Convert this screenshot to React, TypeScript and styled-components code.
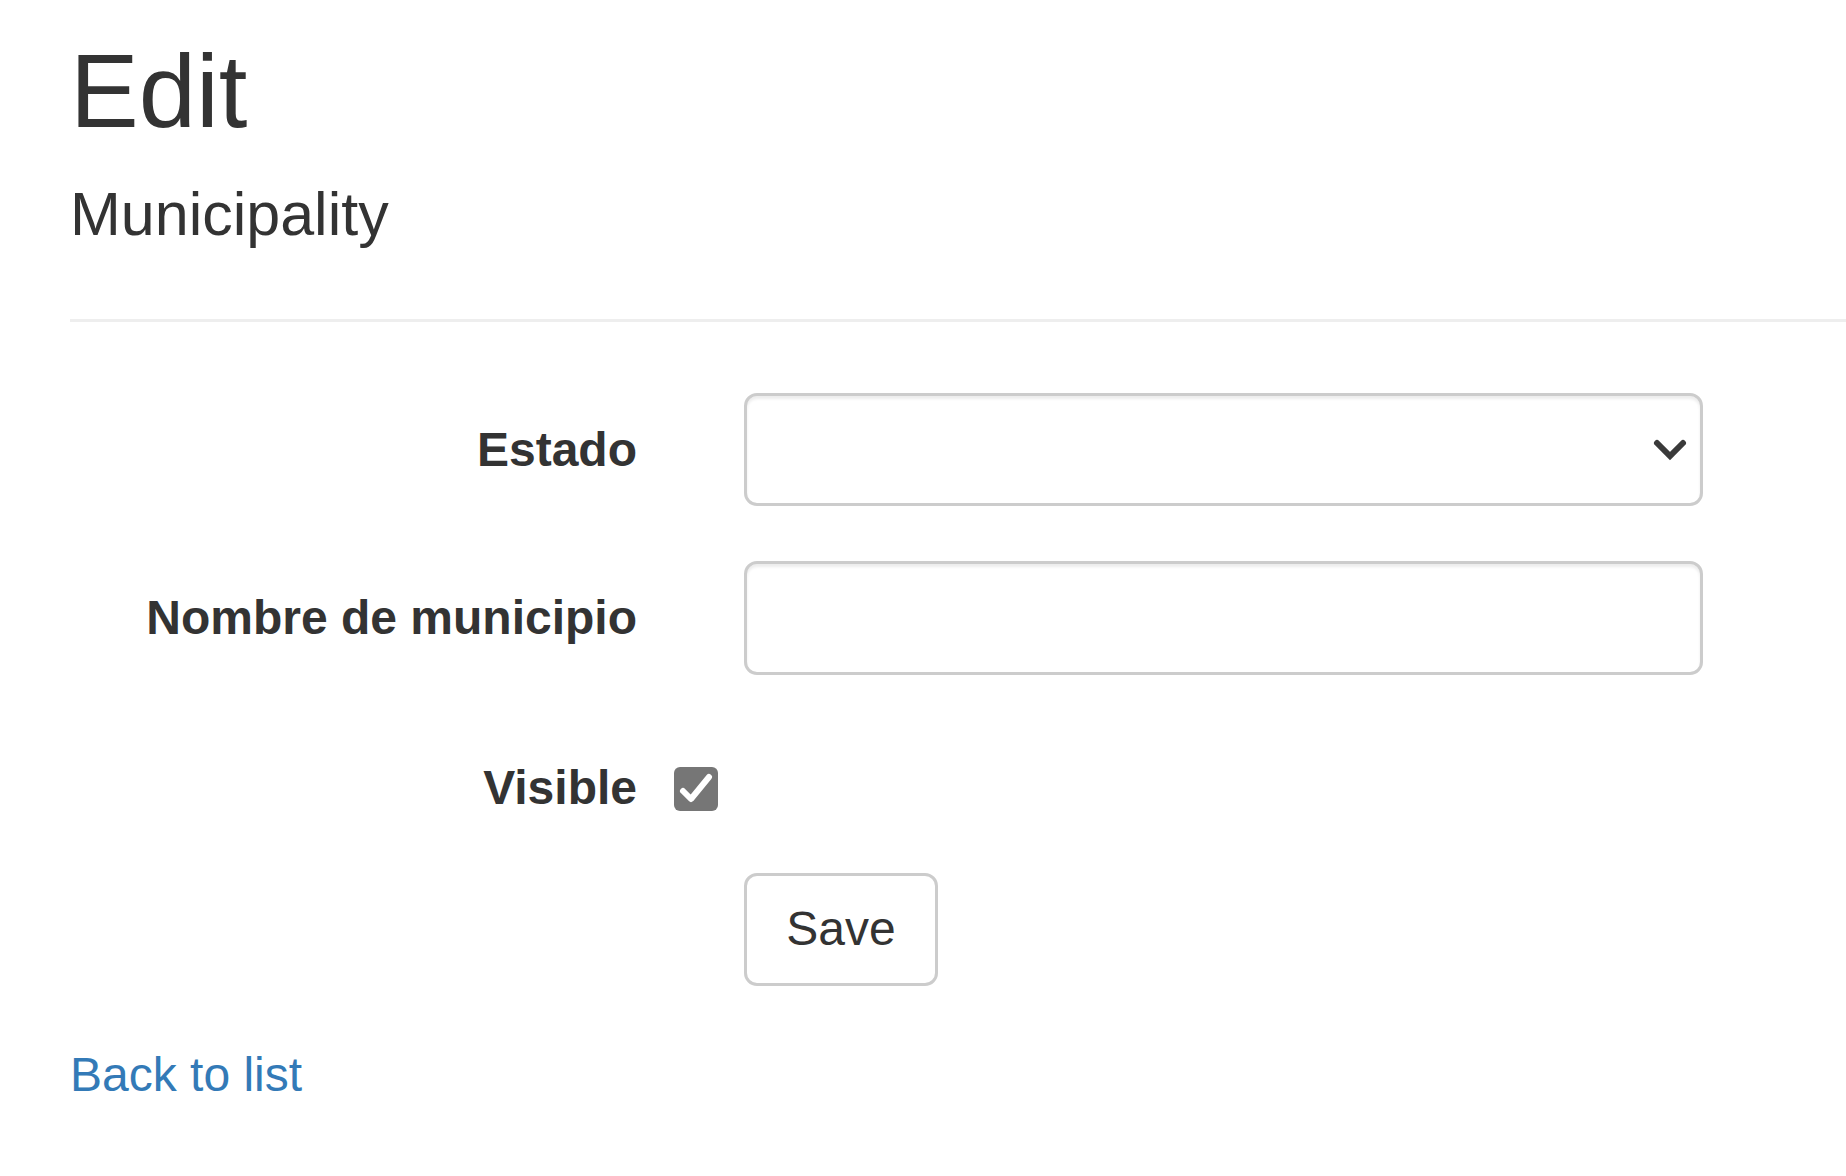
import React from "react";
import styled, { createGlobalStyle } from "styled-components";

const GlobalStyle = createGlobalStyle`
  html, body {
    margin: 0;
    padding: 0;
    background: #ffffff;
    overflow: hidden;
  }
  body {
    font-family: "Liberation Sans", Arial, Helvetica, sans-serif;
    color: #333333;
  }
  * { box-sizing: border-box; }
`;

const Page = styled.main`
  padding-left: 70px;
  padding-top: 35px;
  min-height: 1176px;
`;

const Title = styled.h2`
  margin: 0 0 33px 0;
  font-size: 103px;
  font-weight: 400;
  line-height: 1.1;
  color: #333333;
`;

const Subtitle = styled.h4`
  margin: 0;
  font-size: 61px;
  font-weight: 400;
  line-height: 1.1;
  color: #333333;
`;

const Rule = styled.hr`
  margin: 71px 0 71px 0;
  border: 0;
  border-top: 3px solid #eeeeee;
`;

const Form = styled.form`
  display: flex;
  flex-direction: column;
`;

const FormGroup = styled.div<{ $check?: boolean }>`
  display: grid;
  grid-template-columns: 567px 107px 959px;
  align-items: center;
  min-height: ${(p) => (p.$check ? "44px" : "113px")};
  margin: ${(p) => (p.$check ? "24px 0 50px 0" : "0 0 55px 0")};
`;

const Label = styled.label`
  grid-column: 1;
  justify-self: end;
  font-size: 48px;
  font-weight: 700;
  line-height: 1.42857;
  color: #333333;
`;

const Control = styled.div`
  grid-column: 3;
  position: relative;
`;

const fieldBase = `
  display: block;
  width: 100%;
  height: 114px;
  border: 3px solid #cccccc;
  border-radius: 13px;
  background: #ffffff;
  box-shadow: inset 0 3px 3px rgba(0, 0, 0, 0.075);
  font-family: "Liberation Sans", Arial, sans-serif;
  font-size: 48px;
  color: #555555;
  padding: 0 40px;
  outline: none;
`;

const Select = styled.select`
  ${fieldBase}
  height: 113px;
  appearance: none;
  -webkit-appearance: none;
`;

const Input = styled.input`
  ${fieldBase}
`;

const Chevron = styled.svg`
  position: absolute;
  right: 15px;
  top: 44px;
  width: 36px;
  height: 26px;
  pointer-events: none;
`;

const CheckCell = styled.div`
  grid-column: 2;
  padding-left: 37px;
  display: flex;
  align-items: center;
`;

const CheckBox = styled.span`
  display: inline-flex;
  align-items: center;
  justify-content: center;
  width: 44px;
  height: 44px;
  border-radius: 6px;
  background: #767676;
`;

const Button = styled.button`
  grid-column: 3;
  justify-self: start;
  width: 194px;
  height: 113px;
  border: 3px solid #cccccc;
  border-radius: 13px;
  background: #ffffff;
  color: #333333;
  font-family: "Liberation Sans", Arial, sans-serif;
  font-size: 48px;
  line-height: 1;
  padding: 0;
  cursor: pointer;
`;

const BackLink = styled.a`
  display: inline-block;
  font-size: 48px;
  line-height: 1.42857;
  color: #337ab7;
  text-decoration: none;
`;

const Footer = styled.div`
  margin-top: 0;
`;

export default function App() {
  return (
    <>
      <GlobalStyle />
      <Page>
        <Title>Edit</Title>
        <Subtitle>Municipality</Subtitle>
        <Rule />
        <Form onSubmit={(e) => e.preventDefault()}>
          <FormGroup>
            <Label htmlFor="estado">Estado</Label>
            <Control>
              <Select id="estado" defaultValue="">
                <option value=""></option>
              </Select>
              <Chevron viewBox="0 0 36 26" aria-hidden="true">
                <polyline
                  points="5,6 18,19 31,6"
                  fill="none"
                  stroke="#3a3a3a"
                  strokeWidth="6"
                  strokeLinecap="round"
                  strokeLinejoin="miter"
                />
              </Chevron>
            </Control>
          </FormGroup>
          <FormGroup>
            <Label htmlFor="nombre">Nombre de municipio</Label>
            <Control>
              <Input id="nombre" type="text" defaultValue="" />
            </Control>
          </FormGroup>
          <FormGroup $check>
            <Label htmlFor="visible">Visible</Label>
            <CheckCell>
              <CheckBox id="visible" role="checkbox" aria-checked="true">
                <svg width="44" height="44" viewBox="0 0 44 44" aria-hidden="true">
                  <polyline
                    points="9,24 17,32 35,10"
                    fill="none"
                    stroke="#ffffff"
                    strokeWidth="6"
                    strokeLinecap="round"
                    strokeLinejoin="round"
                  />
                </svg>
              </CheckBox>
            </CheckCell>
          </FormGroup>
          <FormGroup>
            <Button type="submit">Save</Button>
          </FormGroup>
        </Form>
        <Footer>
          <BackLink href="#">Back to list</BackLink>
        </Footer>
      </Page>
    </>
  );
}
